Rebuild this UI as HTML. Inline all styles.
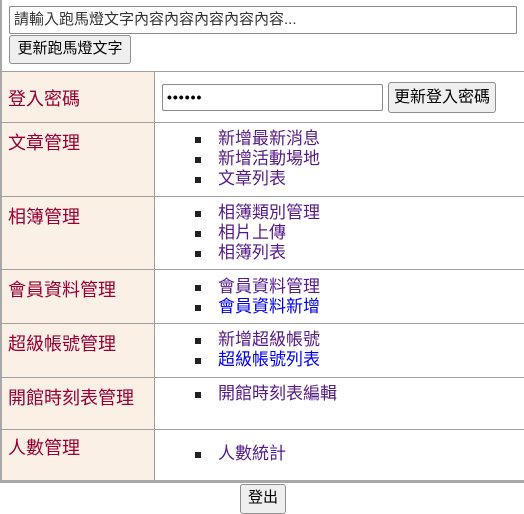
<!DOCTYPE html>
<html><head><meta charset="utf-8">
<style>
*{margin:0;padding:0;box-sizing:border-box}
body{width:524px;height:511px;background:#fff;position:relative;overflow:hidden;font-family:"Liberation Sans","Noto Sans CJK TC",sans-serif;}
.a{position:absolute}
.hl{position:absolute;left:0;width:524px;height:1px;background:#a0a0a0}
.lab{position:absolute;left:8px;font-size:18px;color:#990033;line-height:20px;white-space:nowrap}
.li{position:absolute;left:218px;font-size:17px;line-height:20px;color:#551a8b;white-space:nowrap}
.li.b{color:#0000ee}
.bu{position:absolute;left:195px;width:6px;height:6px;background:#222}
.btn{position:absolute;border:1px solid #8f8f8f;border-radius:3px;background:#efefef;font-size:15px;color:#000;text-align:center;line-height:26px;white-space:nowrap}
.inp{position:absolute;border:1px solid #8a8a8a;border-radius:2px;background:#fff;font-size:14px;padding-left:4px;white-space:nowrap;overflow:hidden}
</style></head><body>
<div class="a" style="left:0;top:0;width:2px;height:483px;background:#a8a8a8"></div>
<div class="a" style="left:2px;top:72px;width:153px;height:408px;background:#faf0e6"></div>
<div class="a" style="left:154px;top:71px;width:1px;height:410px;background:#a0a0a0"></div>
<div class="hl" style="top:71px"></div>
<div class="hl" style="top:122px"></div>
<div class="hl" style="top:196px"></div>
<div class="hl" style="top:269px"></div>
<div class="hl" style="top:323px"></div>
<div class="hl" style="top:377px"></div>
<div class="hl" style="top:429px"></div>
<div class="a" style="left:0;top:480px;width:524px;height:3px;background:#a8a8a8"></div>

<div class="inp" style="left:9px;top:6px;width:508px;height:28px;line-height:26px;color:#333;font-size:15px">請輸入跑馬燈文字內容內容內容內容內容...</div>
<div class="btn" style="left:9px;top:35px;width:122px;height:29px">更新跑馬燈文字</div>

<div class="lab" style="top:89px">登入密碼</div>
<div class="inp" style="left:162px;top:84px;width:221px;height:27px;line-height:24px;font-size:14px;font-weight:bold;letter-spacing:1px">••••••</div>
<div class="btn" style="left:388px;top:82px;width:108px;height:31px;line-height:29px;font-size:16px">更新登入密碼</div>

<div class="lab" style="top:133px">文章管理</div>
<div class="bu" style="top:137px"></div><div class="li" style="top:129px">新增最新消息</div>
<div class="bu" style="top:157px"></div><div class="li" style="top:149px">新增活動場地</div>
<div class="bu" style="top:177px"></div><div class="li" style="top:169px">文章列表</div>

<div class="lab" style="top:207px">相簿管理</div>
<div class="bu" style="top:211px"></div><div class="li" style="top:203px">相簿類別管理</div>
<div class="bu" style="top:231px"></div><div class="li" style="top:223px">相片上傳</div>
<div class="bu" style="top:251px"></div><div class="li" style="top:243px">相簿列表</div>

<div class="lab" style="top:280px">會員資料管理</div>
<div class="bu" style="top:285px"></div><div class="li" style="top:277px">會員資料管理</div>
<div class="bu" style="top:305px"></div><div class="li b" style="top:297px">會員資料新增</div>

<div class="lab" style="top:334px">超級帳號管理</div>
<div class="bu" style="top:338px"></div><div class="li" style="top:330px">新增超級帳號</div>
<div class="bu" style="top:358px"></div><div class="li b" style="top:350px">超級帳號列表</div>

<div class="lab" style="top:388px">開館時刻表管理</div>
<div class="bu" style="top:392px"></div><div class="li" style="top:384px">開館時刻表編輯</div>

<div class="lab" style="top:438px">人數管理</div>
<div class="bu" style="top:452px"></div><div class="li" style="top:444px">人數統計</div>

<div class="btn" style="left:240px;top:484px;width:46px;height:30px">登出</div>
</body></html>
